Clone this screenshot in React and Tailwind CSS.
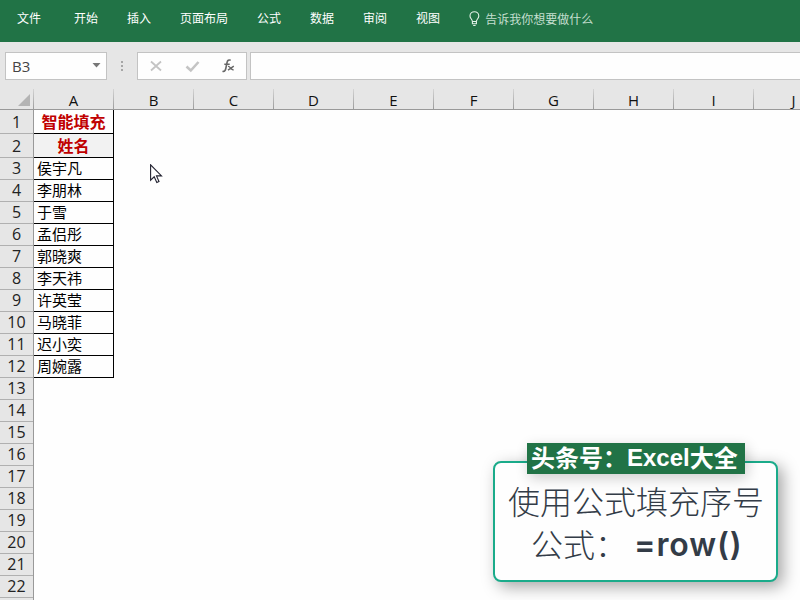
const tabs = [
  { label: '文件', gap: 'mr-[33px]' },
  { label: '开始', gap: 'mr-[29px]' },
  { label: '插入', gap: 'mr-[29px]' },
  { label: '页面布局', gap: 'mr-[29px]' },
  { label: '公式', gap: 'mr-[29px]' },
  { label: '数据', gap: 'mr-[29px]' },
  { label: '审阅', gap: 'mr-[29px]' },
  { label: '视图', gap: 'mr-[29px]' },
];

const columns = ['A', 'B', 'C', 'D', 'E', 'F', 'G', 'H', 'I', 'J'];

const names = ['侯宇凡', '李朋林', '于雪', '孟侣彤', '郭晓爽', '李天祎', '许英莹', '马晓菲', '迟小奕', '周婉露'];

const rowNumbers = Array.from({ length: 22 }, (_, i) => i + 1);

const Ribbon = () => (
  <div className="flex h-[42px] shrink-0 bg-[#217346] pl-[17px] pt-[9px] text-[12px] leading-[18px] text-white">
    {tabs.map(({ label, gap }) => (
      <span key={label} className={`shrink-0 ${gap}`}>{label}</span>
    ))}
    <svg className="mt-[2px] h-[16px] w-[11px] shrink-0" viewBox="0 0 11 16" fill="none" stroke="#e4f2e9" strokeWidth="1.1">
      <path d="M3.4 10.5C3.4 8.3 1 7.6 1 4.9a4.4 4.2 0 0 1 8.8 0c0 2.7-2.4 3.4-2.4 5.6zM3.4 10.5v2.3h4v-2.3M4.2 14.5h2.4" />
    </svg>
    <span className="ml-[5px] mt-px shrink-0 text-[#c4dfcf]">告诉我你想要做什么</span>
  </div>
);

const FormulaBar = () => (
  <div className="flex h-[38px] shrink-0 items-end">
    <div className="ml-[5px] flex h-7 w-[102px] items-center justify-between border border-[#c3c3c3] bg-[#fefefe] pl-[6px] pr-[5px]">
      <span className="font-['Open_Sans','Noto_Sans',sans-serif] text-[15px] text-[#444]">B3</span>
      <svg className="-mt-[2px] h-[5px] w-[9px]" viewBox="0 0 9 5">
        <path d="M.5 0h8l-4 4.5z" fill="#777" />
      </svg>
    </div>
    <svg className="ml-[13px] h-7 w-[4px]" viewBox="0 0 4 28" fill="#a6a6a6">
      <path d="M1 9h2v2H1zM1 13h2v2H1zM1 17h2v2H1z" />
    </svg>
    <div className="ml-[13px] flex h-7 w-[110px] items-center border border-[#c3c3c3] bg-[#fefefe]">
      <svg className="h-[26px] w-[108px]" viewBox="0 0 108 26" fill="none">
        <path d="M13 8.5l10 9M23 8.5l-10 9" stroke="#c4c4c4" strokeWidth="1.8" />
        <path d="M48.5 13.5l4.3 4L60.5 9" stroke="#c4c4c4" strokeWidth="2.6" />
        <path d="M84.5 18.2c2.2.8 2.9-.8 3.4-3.2l1.1-5.4c.5-2.3 1.7-3.1 3.7-2.3M86.3 11.3h5.4" stroke="#666" strokeWidth="1.6" />
        <path d="M90 13.4c2.4-.6 2.5 4.4 5.6 3.2M95.8 13.2l-5.8 4" stroke="#666" strokeWidth="1.4" />
      </svg>
    </div>
    <div className="ml-[3px] h-7 flex-1 border-y border-l border-[#c3c3c3] bg-[#fefefe]" />
  </div>
);

const ColumnHeaders = () => (
  <div className="flex h-[30px] shrink-0 overflow-hidden border-b border-[#999] font-['Open_Sans','Noto_Sans',sans-serif] text-[15px] text-[#111]">
    <div className="flex w-[34px] shrink-0 items-end">
      <svg className="mb-[3px] ml-[18px] h-[12px] w-[12px]" viewBox="0 0 12 12">
        <path d="M12 0v12H0z" fill="#b4b4b4" />
      </svg>
      <span className="ml-auto h-[20px] w-px bg-linear-to-b from-[#d4d4d4] to-[#9c9c9c]" />
    </div>
    {columns.map((c) => (
      <div key={c} className="flex w-[80px] shrink-0 items-end">
        <span className="flex-1 text-center leading-[17px]">{c}</span>
        <span className="h-[20px] w-px bg-linear-to-b from-[#d4d4d4] to-[#9c9c9c]" />
      </div>
    ))}
  </div>
);

const Sheet = () => (
  <div className="flex min-h-0 flex-1 overflow-hidden">
    <div className="w-[34px] shrink-0 border-r border-[#999] font-['Open_Sans','Noto_Sans',sans-serif] text-[16px] text-[#222]">
      {rowNumbers.map((n) => (
        <div
          key={n}
          className={`border-b border-[#b0b0b0] text-center ${n < 3 ? 'h-[24px] leading-[24px]' : 'h-[22px] leading-[20px]'}`}
        >
          {n}
        </div>
      ))}
    </div>
    <div className="flex-1 bg-[#fefefe]">
      <div className="w-[80px] border-r border-black text-[15px] text-black">
        <div className="h-[24px] border-b border-black text-center text-[16px] font-bold leading-[22px] text-[#c00000]">智能填充</div>
        <div className="h-[24px] border-b border-black bg-[#f2f2f2] text-center text-[16px] font-bold leading-[22px] text-[#c00000]">姓名</div>
        {names.map((name) => (
          <div key={name} className="h-[22px] border-b border-black pl-[3px] leading-[19px]">{name}</div>
        ))}
      </div>
    </div>
  </div>
);

const Cursor = () => (
  <svg className="absolute left-[150px] top-[164px] h-[20px] w-[13px]" viewBox="0 0 13 20">
    <path d="M.6.8v15.4l3.6-3.4 2.6 5.7 2.2-1-2.5-5.6h5z" fill="#fff" stroke="#222230" strokeWidth="1.1" />
  </svg>
);

const Callout = () => (
  <div className="absolute left-[493px] top-[461px] h-[121px] w-[285px] rounded-[8px] border-2 border-[#1aab8a] bg-[#fefefe] text-[#333c47] shadow-[5px_5px_16px_rgba(0,0,0,0.35)]">
    <div className="absolute left-[32px] top-[-20px] flex h-[31px] w-[218px] items-center whitespace-nowrap bg-[#217346] pb-[3px] pl-[4px] text-[24px] font-bold text-white shadow-[2px_4px_14px_rgba(0,0,0,0.2)]">
      头条号：<span className="mt-[2px] font-['Liberation_Sans',sans-serif]">Excel</span>大全
    </div>
    <div className="mt-[16px] whitespace-nowrap pl-[13px] text-[32px] font-light leading-[43px]">使用公式填充序号</div>
    <div className="flex whitespace-nowrap pl-[36px] text-[32px] font-light leading-[43px]">
      <span>公式：</span>
      <span className="ml-[7px] mt-px font-['Inter',sans-serif] font-semibold tracking-[0.9px]">=row()</span>
    </div>
  </div>
);

const App = () => (
  <div className="relative flex h-[600px] w-[800px] flex-col overflow-hidden bg-[#e6e6e6] font-['Noto_Sans_CJK_SC',sans-serif]">
    <Ribbon />
    <FormulaBar />
    <ColumnHeaders />
    <Sheet />
    <Cursor />
    <Callout />
  </div>
);

export default App;
